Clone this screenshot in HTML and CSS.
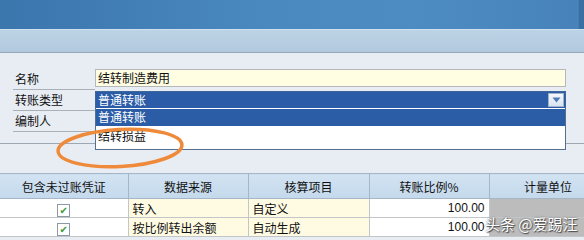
FILE: index.html
```html
<!DOCTYPE html>
<html>
<head>
<meta charset="UTF-8">
<title>自动转账凭证</title>
<link rel="stylesheet" href="styles.css">
</head>
<body>
<div class="titlebar"></div>
<div class="toolbar"></div>

<div class="form">
	<div class="row">
		<span class="label">名称</span>
		<div class="field input">结转制造费用</div>
	</div>
	<div class="row">
		<span class="label">转账类型</span>
		<div class="field select">普通转账<span class="arrow"><svg width="9" height="6" viewBox="0 0 9 6"><path d="M0.5 0.5h8L4.5 5.5z" fill="#4f79b4"/></svg></span></div>
	</div>
	<div class="row">
		<span class="label">编制人</span>
		<div class="field"></div>
	</div>

	<ul class="droplist">
		<li class="on">普通转账</li>
		<li>结转损益</li>
	</ul>

	<svg class="mark" width="140" height="50" viewBox="0 0 140 50">
		<ellipse cx="70" cy="25" rx="62" ry="18.5" fill="none" stroke="#ef8a3a" stroke-width="3.5" transform="rotate(-3 70 25)"/>
	</svg>
</div>

<table class="grid">
	<colgroup>
		<col style="width:128px">
		<col style="width:120px">
		<col style="width:121px">
		<col style="width:120px">
		<col>
	</colgroup>
	<tr>
		<th>包含未过账凭证</th>
		<th>数据来源</th>
		<th>核算项目</th>
		<th>转账比例%</th>
		<th class="unit">计量单位</th>
	</tr>
	<tr>
		<td class="chk"><span class="box">&#10004;</span></td>
		<td class="yel">转入</td>
		<td class="yel">自定义</td>
		<td class="num">100.00</td>
		<td class="gray"></td>
	</tr>
	<tr>
		<td class="chk"><span class="box">&#10004;</span></td>
		<td class="yel">按比例转出余额</td>
		<td class="yel">自动生成</td>
		<td class="num">100.00</td>
		<td class="gray"></td>
	</tr>
</table>

<div class="watermark">头条 @爱踢汪</div>
</body>
</html>
```

FILE: styles.css
```css
body {
margin:0;
background:#e8edf4;
font-family:"Noto Sans CJK SC","Liberation Sans",sans-serif;
font-size:12px;
color:#111;
overflow:hidden;
position:relative;
height:240px;
}
.titlebar {
height:29px;
background:linear-gradient(to right,#3b76ad 0%,#4a88c0 45%,#4d8cc3 70%,#4783ba 99%,#3a6fa2 99.2%);
}
.toolbar {
height:22px;
border-top:1px solid #cfe0ee;
border-bottom:1px solid #95a9bd;
background:linear-gradient(to bottom,#bcd2e5 0%,#b7cde1 60%,#b2c8dc 100%);
}
.form {
position:relative;
padding:16px 0 11px;
border-bottom:1px solid #9ea8b3;
}
.row {
display:flex;
height:21px;
}
.label {
width:82px;
margin-left:13px;
padding-left:2px;
box-sizing:border-box;
border-bottom:1px solid #a9b0b8;
line-height:19px;
}
.field {
width:471px;
height:18px;
box-sizing:border-box;
line-height:16px;
padding-left:2px;
}
.input {
background:#fffde2;
border:1px solid #b4b8bc;
}
.select {
display:flex;
justify-content:space-between;
margin-top:1px;
background:#2a5ca7;
color:#fff;
border:1px solid #3f6699;
padding-right:1px;
}
.arrow {
display:flex;
align-items:center;
justify-content:center;
width:16px;
height:14px;
margin-top:1px;
background:linear-gradient(#f4f8fc,#d9e4f0);
border:1px solid #9fb3cc;
box-sizing:border-box;
}
.droplist {
position:absolute;
left:95px;
top:55px;
width:471px;
margin:0;
padding:1px 0;
list-style:none;
background:#fff;
border:1px solid #55708f;
border-top:0;
box-sizing:border-box;
}
.droplist li {
height:19px;
line-height:18px;
padding-left:2px;
}
.droplist li.on {
background:#2b5da6;
color:#fff;
height:17px;
line-height:16px;
}
.droplist li + li {
height:22px;
line-height:20px;
}
.mark {
position:absolute;
left:50px;
top:70px;
}
.grid {
margin-top:29px;
border-collapse:collapse;
table-layout:fixed;
width:584px;
}
.grid th {
height:24px;
font-weight:normal;
background:linear-gradient(#d2e3f2,#c4d9ec);
border:1px solid #a4b6c8;
border-left:0;
padding:0;
}
.grid th.unit {
text-align:right;
padding-right:12px;
border-right:0;
}
.grid td {
height:18px;
border-bottom:1px solid #c3c6c9;
border-right:1px solid #c3c6c9;
padding:0 4px;
background:#fff;
white-space:nowrap;
}
.grid td.yel {
background:#fffbe3;
}
.grid td.num {
text-align:right;
font-family:"Liberation Sans",sans-serif;
padding-right:4px;
}
.grid td.gray {
background:#bcbcbc;
border-right:0;
}
.grid td.chk {
text-align:center;
}
.box {
display:inline-block;
width:11px;
height:11px;
line-height:11px;
border:1px solid #8c9aa8;
background:#fff;
color:#3d9a3a;
font-size:10px;
vertical-align:middle;
font-family:"DejaVu Sans",sans-serif;
}
.watermark {
position:absolute;
left:485px;
top:213px;
color:#fff;
font-size:15px;
text-shadow:0 0 2px #555,1px 1px 1px #444;
}
```
